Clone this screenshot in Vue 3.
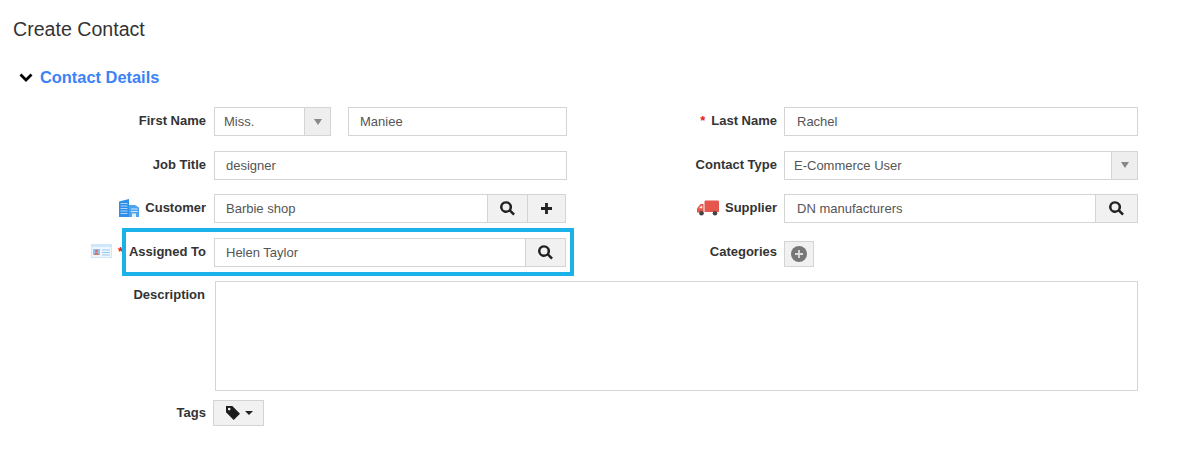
<script setup>
const searchPath = 'M6.2 1a5.2 5.2 0 1 0 3 9.4l3.3 3.3 1.6-1.6-3.3-3.3A5.2 5.2 0 0 0 6.2 1zm0 2.1a3.1 3.1 0 1 1 0 6.2 3.1 3.1 0 0 1 0-6.2z'
</script>

<template>
  <main class="page">
    <h1 class="title">Create Contact</h1>
    <h2 class="section">
      <svg class="chevron" viewBox="0 0 14 10" width="14" height="10"><path d="M1.5 2.5 7 8l5.500-5.500" fill="none" stroke="#000" stroke-width="2.800"/></svg>
      <span>Contact Details</span>
    </h2>

    <form class="form">
      <label class="label">First Name</label>
      <div class="name-pair">
        <div class="control salutation">
          <span class="value">Miss.</span>
          <span class="select-btn"><i class="caret"></i></span>
        </div>
        <div class="control name"><span class="value">Maniee</span></div>
      </div>
      <label class="label label-right"><b class="req req-tight">*</b>Last Name</label>
      <div class="control control-right"><span class="value">Rachel</span></div>

      <label class="label">Job Title</label>
      <div class="control"><span class="value">designer</span></div>
      <label class="label label-right">Contact Type</label>
      <div class="control">
        <span class="value value-narrow">E-Commerce User</span>
        <span class="select-btn"><i class="caret"></i></span>
      </div>

      <label class="label">
        <svg class="icon-building" viewBox="0 0 20 18" width="20" height="18">
          <path d="M0 2.500 10 0v18H0z" fill="#2f8fe8"/>
          <path d="M10 6h6l4 2.500V18H10z" fill="#4ea3ee"/>
          <path d="M1.500 4.500h7M1.500 7h7M1.500 9.500h7M1.500 12h7M1.500 14.500h7" stroke="#a9d3f8" stroke-width="1"/>
          <path d="M12 10h6.500M12 12.500h6.500" stroke="#cfe6fb" stroke-width="1"/>
          <rect x="13" y="14.500" width="4" height="3.500" fill="#e3f1fd"/>
        </svg>
        Customer
      </label>
      <div class="control control-inset">
        <span class="value">Barbie shop</span>
        <span class="addon"><svg viewBox="0 0 15 15" width="17" height="17"><path :d="searchPath" fill="#222"/></svg></span>
        <span class="addon addon-plus"><svg viewBox="0 0 11 11" width="11" height="11"><path d="M5.500 0v11M0 5.500h11" stroke="#222" stroke-width="2.800"/></svg></span>
      </div>
      <label class="label label-right">
        <svg class="icon-truck" viewBox="0 0 22 16" width="22" height="16">
          <path d="M7.500 1.500a1 1 0 0 1 1-1H21a1 1 0 0 1 1 1V12H7.500z" fill="#e5574d"/>
          <path d="M6.500 4H3.500L0 8.500V12.500h6.500z" fill="#e5574d"/>
          <path d="M2 8.300 4 5.700h1.300v2.600z" fill="#fbe3e0"/>
          <circle cx="4.500" cy="13.300" r="2.300" fill="#444"/>
          <circle cx="18" cy="13.300" r="2.300" fill="#444"/>
        </svg>
        Supplier
      </label>
      <div class="control control-right">
        <span class="value">DN manufacturers</span>
        <span class="addon addon-wide"><svg viewBox="0 0 15 15" width="17" height="17"><path :d="searchPath" fill="#222"/></svg></span>
      </div>

      <label class="label">
        <svg class="icon-card" viewBox="0 0 21 14" width="21" height="14">
          <rect x="0" y="0" width="21" height="14" fill="#cfe6fb"/>
          <rect x="1" y="3" width="19" height="10" fill="#eef7fe"/>
          <rect x="2" y="5" width="7" height="6" fill="#8fc4f2"/>
          <circle cx="5.500" cy="7" r="1.500" fill="#d0766a"/>
          <path d="M3 11c.3-2 1.500-2.300 2.500-2.300S7.700 9 8 11z" fill="#d0766a"/>
          <path d="M11 6h8M11 8.500h8M11 11h8" stroke="#9cc9ef" stroke-width="1"/>
        </svg>
        <b class="req req-assign">*</b>Assigned To
      </label>
      <div class="control control-inset highlighted">
        <span class="value">Helen Taylor</span>
        <span class="addon addon-assign"><svg viewBox="0 0 15 15" width="17" height="17"><path :d="searchPath" fill="#222"/></svg></span>
      </div>
      <label class="label label-right">Categories</label>
      <div class="categories">
        <span class="cat-btn">
          <svg viewBox="0 0 16 16" width="16" height="16"><circle cx="8" cy="8" r="8" fill="#777"/><path d="M8 4v8M4 8h8" stroke="#ddd" stroke-width="1.800"/></svg>
        </span>
      </div>

      <label class="label label-top">Description</label>
      <div class="textarea"></div>

      <label class="label label-tags">Tags</label>
      <div class="tags-cell">
        <span class="tag-btn">
          <svg viewBox="0 0 16 16" width="16" height="16"><path fill-rule="evenodd" d="M1 1h6.300L15 8.700 8.700 15 1 7.300zm3.200 1.800a1.300 1.300 0 1 0 0 2.600 1.300 1.300 0 0 0 0-2.600z" fill="#1b1b1b"/></svg>
          <i class="tag-caret"></i>
        </span>
      </div>
    </form>
  </main>
</template>

<style>
html, body { background: #fff; }
</style>

<style scoped>
.page {
  width: 1199px;
  height: 460px;
  overflow: hidden;
  box-sizing: border-box;
  padding: 18px 0 0 13px;
  font-family: "Liberation Sans", Arial, sans-serif;
  color: #333;
}
.title {
  margin: 0;
  font-size: 19.6px;
  line-height: 22px;
  font-weight: 400;
  color: #333;
}
.section {
  margin: 27px 0 0 6px;
  display: flex;
  align-items: center;
  gap: 7px;
  font-size: 16.4px;
  line-height: 20px;
  font-weight: 700;
  color: #3b82f6;
}
.form {
  margin: 20px 0 0 -13px;
  display: grid;
  grid-template-columns: 214px 353px 217px 354px;
  grid-template-rows: 29px 29px 29px 29px 110px 26px;
  row-gap: 14.5px;
}
.label {
  padding-right: 8px;
  display: flex;
  align-items: center;
  justify-content: flex-end;
  font-size: 13px;
  font-weight: 700;
  color: #333;
  white-space: nowrap;
  position: relative;
  top: -1px;
}
.label-right { padding-right: 7px; }
.label-top { align-items: flex-start; padding-top: 7px; padding-right: 9px; }
.label-tags { top: 0; margin-top: -6px; height: 26px; }
.req { color: #e0201c; font-weight: 700; margin-right: 2px; }
.req-tight { margin-right: 6px; }
.req-assign { margin-right: 6px; }
.icon-building { margin-right: 6px; }
.icon-truck { margin-right: 6px; }
.icon-card { margin-right: 6px; }
.control {
  display: flex;
  box-sizing: border-box;
  border: 1px solid #d4d4d4;
  background: #fff;
  height: 29px;
  align-items: stretch;
  font-size: 13px;
  color: #555;
}
.control-inset { margin-right: 1px; }
.value {
  flex: 1;
  padding-left: 11px;
  line-height: 27px;
  white-space: nowrap;
}
.control-right .value { padding-left: 12px; }
.name-pair {
  display: flex;
  gap: 17px;
}
.salutation { width: 117px; }
.salutation .value { padding-left: 9px; }
.name { flex: 1; }
.select-btn {
  box-sizing: border-box;
  width: 26px;
  background: #eee;
  border-left: 1px solid #d4d4d4;
  display: flex;
  align-items: center;
  justify-content: center;
}
.value-narrow { padding-left: 9px; }
.caret {
  width: 0;
  height: 0;
  border-left: 4px solid transparent;
  border-right: 4px solid transparent;
  border-top: 6px solid #888;
}
.addon {
  box-sizing: border-box;
  width: 40px;
  background: #f1f1f1;
  border-left: 1px solid #d4d4d4;
  display: flex;
  align-items: center;
  justify-content: center;
}
.addon-plus { width: 38px; }
.addon-wide { width: 42px; }
.highlighted { position: relative; }
.highlighted::after {
  content: "";
  position: absolute;
  left: -93px;
  right: -9px;
  top: -11px;
  bottom: -10px;
  border: 4px solid #1ab2e8;
  pointer-events: none;
}
.categories { display: flex; align-items: flex-start; }
.cat-btn {
  box-sizing: border-box;
  width: 30px;
  height: 26px;
  margin-top: 3px;
  background: #f1f1f1;
  border: 1px solid #d4d4d4;
  display: flex;
  align-items: center;
  justify-content: center;
}
.textarea {
  grid-column: 2 / 5;
  margin-left: 1px;
  box-sizing: border-box;
  border: 1px solid #d4d4d4;
  background: #fff;
}
.tags-cell { display: flex; margin: -6px 0 0 -1px; }
.tag-btn {
  box-sizing: border-box;
  width: 51px;
  height: 26px;
  background: #f1f1f1;
  border: 1px solid #d4d4d4;
  display: flex;
  align-items: center;
  justify-content: center;
  gap: 4px;
}
.tag-caret {
  width: 0;
  height: 0;
  border-left: 4px solid transparent;
  border-right: 4px solid transparent;
  border-top: 4px solid #222;
}
</style>
